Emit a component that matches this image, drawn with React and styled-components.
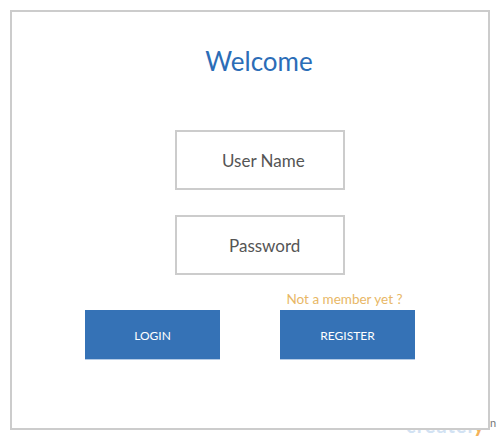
import React from "react";
import styled, { createGlobalStyle } from "styled-components";

const GlobalStyle = createGlobalStyle`
  html, body {
    margin: 0;
    padding: 0;
    background: #ffffff;
    font-family: Lato, "Open Sans", "Liberation Sans", sans-serif;
  }
`;

const Page = styled.div`
  position: relative;
  width: 500px;
  height: 440px;
  padding: 10px;
  box-sizing: border-box;
  overflow: hidden;
`;

const Frame = styled.div`
  position: relative;
  z-index: 1;
  width: 480px;
  height: 420px;
  box-sizing: border-box;
  border: 2px solid #cccccc;
  background: #ffffff;
  display: flex;
  flex-direction: column;
  align-items: center;
  padding-top: 34px;
`;

const Title = styled.h1`
  margin: 0 0 54px 18px;
  font-size: 26px;
  line-height: 30px;
  font-weight: 400;
  color: #2b6db7;
`;

const Field = styled.div`
  width: 170px;
  height: 60px;
  box-sizing: border-box;
  margin: 0 0 ${({ $gap }) => $gap}px 20px;
  border: 2px solid #cccccc;
  display: flex;
  align-items: center;
  padding-left: ${({ $indent }) => $indent}px;
  font-size: 17px;
  color: #555555;
`;

const ButtonRow = styled.div`
  display: flex;
  align-items: flex-end;
  gap: 60px;
`;

const Column = styled.div`
  display: flex;
  flex-direction: column;
  align-items: center;
`;

const Note = styled.span`
  margin: 0 0 2px -6px;
  font-size: 13.5px;
  line-height: 17px;
  color: #e8b765;
`;

const Button = styled.button`
  width: 135px;
  height: 50px;
  box-sizing: border-box;
  border: none;
  border-bottom: 1px solid #b4cbe6;
  background: #3572b6;
  color: #ffffff;
  font-family: inherit;
  font-size: 12px;
  padding-top: 2px;
  cursor: pointer;
`;

const Watermark = styled.span`
  position: absolute;
  left: 406px;
  top: 413px;
  font-size: 20px;
  font-weight: 700;
  color: #d2e2f3;
  letter-spacing: 1px;

  b {
    color: #f4b35a;
  }
`;

const Corner = styled.span`
  position: absolute;
  left: 490px;
  top: 416px;
  font-size: 11px;
  color: #777777;
`;

function App() {
  return (
    <>
      <GlobalStyle />
      <Page>
        <Frame>
          <Title>Welcome</Title>
          <Field $indent={45} $gap={25}>User Name</Field>
          <Field $indent={52} $gap={16}>Password</Field>
          <ButtonRow>
            <Button type="button">LOGIN</Button>
            <Column>
              <Note>Not a member yet ?</Note>
              <Button type="button">REGISTER</Button>
            </Column>
          </ButtonRow>
        </Frame>
        <Watermark>
          createl<b>y</b>
        </Watermark>
        <Corner>n</Corner>
      </Page>
    </>
  );
}

export default App;
